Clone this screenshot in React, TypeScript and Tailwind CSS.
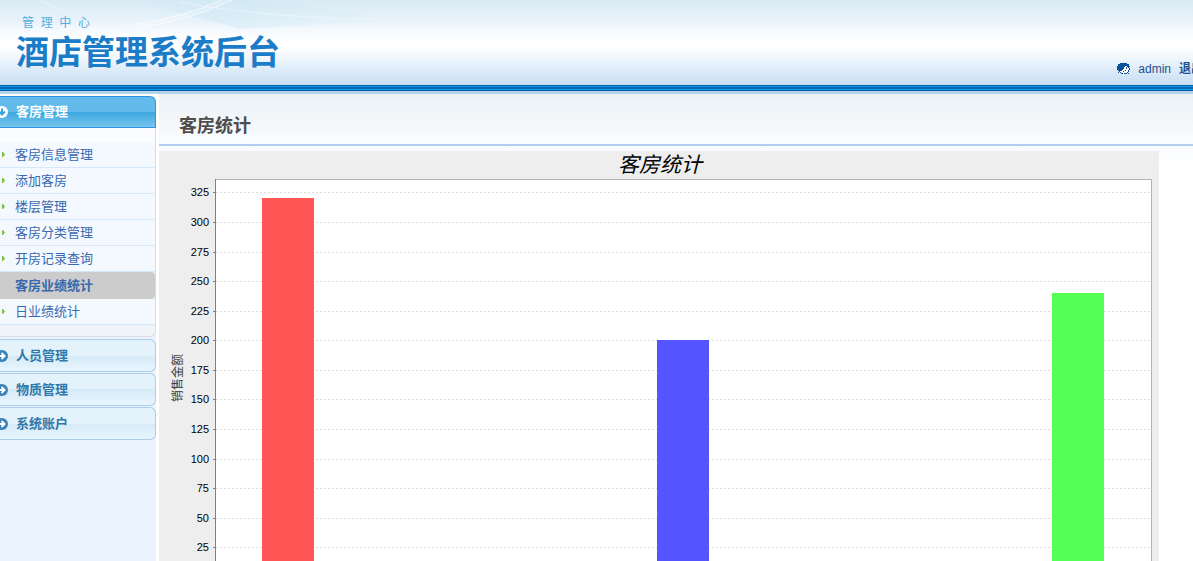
import React from 'react';

const MENU = [
    { label: '客房信息管理' },
    { label: '添加客房' },
    { label: '楼层管理' },
    { label: '客房分类管理' },
    { label: '开房记录查询' },
    { label: '客房业绩统计', active: true },
    { label: '日业绩统计' },
];

const GROUPS = ['人员管理', '物质管理', '系统账户'];

const TICKS = [25, 50, 75, 100, 125, 150, 175, 200, 225, 250, 275, 300, 325];

const BARS = [
    { value: 320, x: 103, color: '#ff5555' },
    { value: 200, x: 498, color: '#5555ff' },
    { value: 240, x: 893, color: '#55ff55' },
];

const BASELINE = 426;
const yOf = (value: number) => Math.round(BASELINE - value * 1.1835);

const ArrowIcon: React.FC<{ down?: boolean }> = ({ down }) => (
    <svg className="-ml-1 h-3 w-3 shrink-0" viewBox="0 0 12 12" aria-hidden="true">
        <circle cx="6" cy="6" r="6" fill={down ? '#ffffff' : '#3b82b8'} />
        <path
            d={down ? 'M6 2.5v6M3 5.5l3 3 3-3' : 'M2.5 6h6M5.5 3l3 3-3 3'}
            fill="none"
            stroke={down ? '#3ba3dd' : '#ffffff'}
            strokeWidth="2"
        />
    </svg>
);

const UserIcon: React.FC = () => (
    <svg className="h-3 w-[13px]" viewBox="0 0 13 12" shapeRendering="crispEdges" aria-hidden="true">
        <path d="M4 4h8v4h-1v2H9v1H4V9H3V6h1z" fill="#ffffff" />
        <path d="M3 0h7v1h2v2h1v1h-1v1h-1V4h-1V3H8v1H7v2H6v1H5v1H3v1H2V8H1V7H0V3h1V1h2z" fill="#0a519c" />
        <path d="M9 4h1v2H9zM12 5h1v2h-1zM11 7h1v2h-1zM10 9h1v1h-1zM6 8h1v1H6zM3 9h1v1H3zM1 9h1v1H1zM4 10h2v1H4zM7 10h3v1H7zM11 10h1v1h-1zM8 7h1v1H8z" fill="#0a519c" />
    </svg>
);

const Header: React.FC = () => (
    <header className="relative shrink-0 overflow-hidden">
        <div className="flex h-[85px] items-end justify-between bg-[linear-gradient(#d8eaf4_0%,#e9f3fa_25%,#fafcfe_40%,#ffffff_55%,#f4f9fd_65%,#c6def3_100%)]">
            <svg className="absolute top-0 left-0 h-10 w-[400px]" viewBox="0 0 400 40" fill="none" aria-hidden="true">
                <defs>
                    <linearGradient id="haze">
                        <stop offset="0" stopColor="#cbe8f5" stopOpacity="0" />
                        <stop offset=".3" stopColor="#cbe8f5" stopOpacity=".5" />
                        <stop offset="1" stopColor="#cbe8f5" stopOpacity="0" />
                    </linearGradient>
                </defs>
                <path d="M130 0L240 29 400 20 265 0z" fill="url(#haze)" />
                <path d="M38 0Q50 6 61 10M180 2Q270 19 400 20" stroke="#ffffff" opacity=".4" />
                <path d="M232 0Q190 20 137 28M222 0Q185 17 137 24" stroke="#ffffff" opacity=".8" />
                <path d="M227 0Q170 26 90 31" stroke="#ffffff" opacity=".4" />
            </svg>
            <div className="relative pb-[10px] pl-4">
                <p className="pl-[6px] text-[12px] leading-4 whitespace-pre text-[#55aee0]">{'管  理  中  心'}</p>
                <h1 className="text-[33px] leading-[44px] font-bold text-[#1b7cc8]">酒店管理系统后台</h1>
            </div>
            <div className="relative -mr-6 flex shrink-0 items-center pb-2 text-[12px] leading-4 text-[#1f5090]">
                <UserIcon />
                <span className="ml-2">admin</span>
                <a href="#logout" className="ml-2 w-[38px] font-bold whitespace-nowrap">退出</a>
            </div>
        </div>
        <div className="h-[6px] bg-[linear-gradient(#005ba5_0_1px,#1398e4_1px_2px,#0767b4_2px_4px,#1199e8_4px_5px,#005ba5_5px_6px)]" />
        <div className="h-[3px] bg-[#b5d3ed]" />
    </header>
);

const Sidebar: React.FC = () => (
    <nav className="w-[156px] shrink-0 bg-[#ebf3ff] text-[13px]">
        <div className="bg-white pt-[2px]">
            <button className="flex h-8 w-full items-center rounded-tr-md border-y border-r border-[#2d94e4] bg-[linear-gradient(#62bbea_0_50%,#3ba8e0_50%,#79c4ed_100%)] font-bold text-white">
                <ArrowIcon down />
                <span className="ml-2">客房管理</span>
            </button>
        </div>
        <ul className="rounded-br-md border-r border-b border-[#d9dde2] bg-[#f1f5f9]">
            <li className="h-[14px] bg-[#fafcff]" />
            {MENU.map((item) => (
                <li key={item.label}>
                    <a
                        href="#menu"
                        className={
                            item.active
                                ? 'flex h-[27px] items-center rounded-r-sm bg-[#cccccc] font-bold text-[#3a69ad]'
                                : 'flex h-[26px] items-center border-b border-[#d5e9fb] bg-[#f4f9ff] text-[#3a69ad]'
                        }
                    >
                        <svg className="ml-[2px] h-[5px] w-[3px] shrink-0" viewBox="0 0 3 5" aria-hidden="true">
                            {!item.active && <path d="M0 0h1l2 2.5L1 5H0z" fill="#7fc242" />}
                        </svg>
                        <span className="ml-[10px]">{item.label}</span>
                    </a>
                </li>
            ))}
            <li className="h-[11px]" />
        </ul>
        <div className="mt-[2px] flex flex-col gap-px">
            {GROUPS.map((label) => (
                <button
                    key={label}
                    className="flex h-[33px] items-center rounded-r-md border-y border-r border-[#aacdea] bg-[linear-gradient(#e4f2fb_0_50%,#d5eaf7_50%,#e8f5fd_100%)] font-bold text-[#2f78ab]"
                >
                    <ArrowIcon />
                    <span className="ml-2">{label}</span>
                </button>
            ))}
        </div>
    </nav>
);

const Chart: React.FC = () => (
    <svg className="block h-[450px] w-[1000px]" viewBox="0 0 1000 450" role="img" aria-label="客房统计">
        <rect width="1000" height="450" fill="#eeeeee" />
        <text x="501" y="21" textAnchor="middle" fontSize="21" fontStyle="italic">客房统计</text>
        <text transform="translate(23 227) rotate(-90)" textAnchor="middle" fontSize="12" fill="#404040">销售金额</text>
        <rect x="56.5" y="28.5" width="936" height="397" fill="#ffffff" stroke="#b4b4b4" />
        <path d="M56.5 28V426" stroke="#808080" />
        {TICKS.map((tick) => (
            <g key={tick}>
                <path d={`M57 ${yOf(tick) + 0.5}H992`} stroke="#dddddd" strokeDasharray="2 2" />
                <path d={`M54 ${yOf(tick) + 0.5}h2`} stroke="#808080" />
                <text x="50" y={yOf(tick) + 4} textAnchor="end" fontSize="11">{tick}</text>
            </g>
        ))}
        {BARS.map((bar) => (
            <rect key={bar.color} x={bar.x} y={yOf(bar.value)} width="52" height={BASELINE - yOf(bar.value)} fill={bar.color} />
        ))}
    </svg>
);

export default function App() {
    return (
        <div className="flex h-screen flex-col overflow-hidden bg-white font-['Liberation_Sans','Noto_Sans_CJK_SC',sans-serif]">
            <Header />
            <div className="flex min-h-0 flex-1">
                <Sidebar />
                <main className="ml-[3px] min-w-0 flex-1 overflow-hidden">
                    <div className="flex h-[52px] items-end border-b-2 border-[#b0cfee] bg-[linear-gradient(#eaf1f5,#fbfcfe)] pb-[2px] pl-5">
                        <h2 className="text-[18px] leading-8 font-bold text-[#4d4d4d]">客房统计</h2>
                    </div>
                    <div className="bg-[linear-gradient(#f9fcff,#ffffff_24px)] pt-[5px]">
                        <Chart />
                    </div>
                </main>
            </div>
        </div>
    );
}
